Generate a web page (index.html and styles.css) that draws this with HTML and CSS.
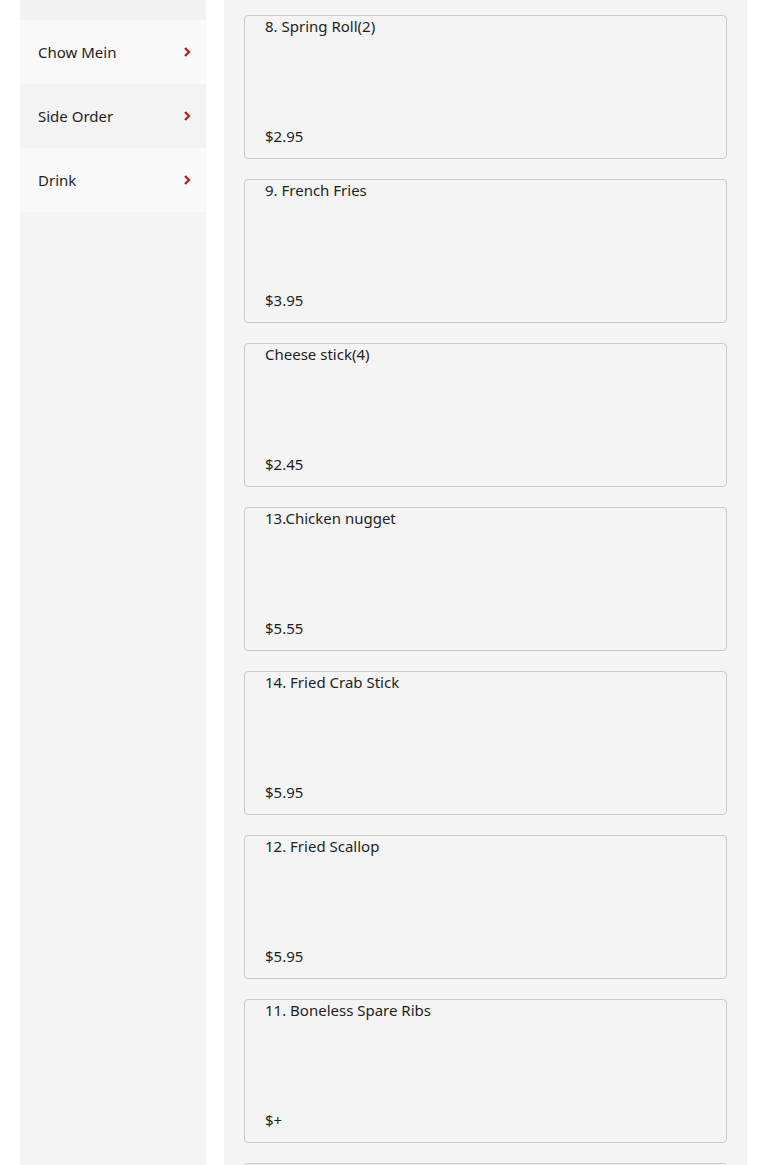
FILE: index.html
```html
<!DOCTYPE html>
<html lang="en">
<head>
    <meta charset="UTF-8">
    <meta name="viewport" content="width=device-width, initial-scale=1.0">
    <title>Menu</title>
    <link rel="stylesheet" href="styles.css">
</head>
<body>

<div class="menu">
    <!-- Category list -->
    <ul class="categories">
        <li class="category"><span>Chow Mein</span><svg class="chevron" viewBox="0 0 8 12"><path d="M2 2 L6 6 L2 10"/></svg></li>
        <li class="category"><span>Side Order</span><svg class="chevron" viewBox="0 0 8 12"><path d="M2 2 L6 6 L2 10"/></svg></li>
        <li class="category"><span>Drink</span><svg class="chevron" viewBox="0 0 8 12"><path d="M2 2 L6 6 L2 10"/></svg></li>
    </ul>

    <!-- Items -->
    <div class="items">
        <div class="item"><div class="item-name">8. Spring Roll(2)</div><div class="item-price">$2.95</div></div>
        <div class="item"><div class="item-name">9. French Fries</div><div class="item-price">$3.95</div></div>
        <div class="item"><div class="item-name">Cheese stick(4)</div><div class="item-price">$2.45</div></div>
        <div class="item"><div class="item-name">13.Chicken nugget</div><div class="item-price">$5.55</div></div>
        <div class="item"><div class="item-name">14. Fried Crab Stick</div><div class="item-price">$5.95</div></div>
        <div class="item"><div class="item-name">12. Fried Scallop</div><div class="item-price">$5.95</div></div>
        <div class="item"><div class="item-name">11. Boneless Spare Ribs</div><div class="item-price">$+</div></div>
        <div class="item"></div>
    </div>
</div>

</body>
</html>
```

FILE: styles.css
```css
body {
    font-family: "Noto Sans", "Liberation Sans", sans-serif;
    background-color: #fff;
    color: #1e1e1e;
    margin: 0;
    padding: 0;
}
.menu {
    display: flex;
    align-items: stretch;
    gap: 18px;
    padding: 0 18px 0 20px;
}
.categories {
    list-style: none;
    margin: 0;
    padding: 0;
    width: 186px;
    flex-shrink: 0;
    border-top: 20px solid #f2f2f2;
    background-color: #f4f4f4;
}
.category {
    display: flex;
    align-items: center;
    justify-content: space-between;
    height: 64px;
    padding: 0 15px 0 18px;
    font-size: 15px;
    background-color: #f9f9f9;
}
.category:nth-child(even) {
    background-color: #f3f3f3;
}
.chevron {
    width: 8px;
    height: 12px;
    fill: none;
    stroke: #a8262c;
    stroke-width: 2.4;
}
.items {
    flex: 1;
    display: flex;
    flex-direction: column;
    gap: 20px;
    padding: 15px 20px 20px;
    background-color: #f4f4f4;
}
.item {
    display: flex;
    flex-direction: column;
    justify-content: space-between;
    height: 144px;
    box-sizing: border-box;
    padding: 0 20px 12px;
    border: 1px solid #c9c9c9;
    border-radius: 4px;
    font-size: 15px;
    line-height: 20px;
}
```
